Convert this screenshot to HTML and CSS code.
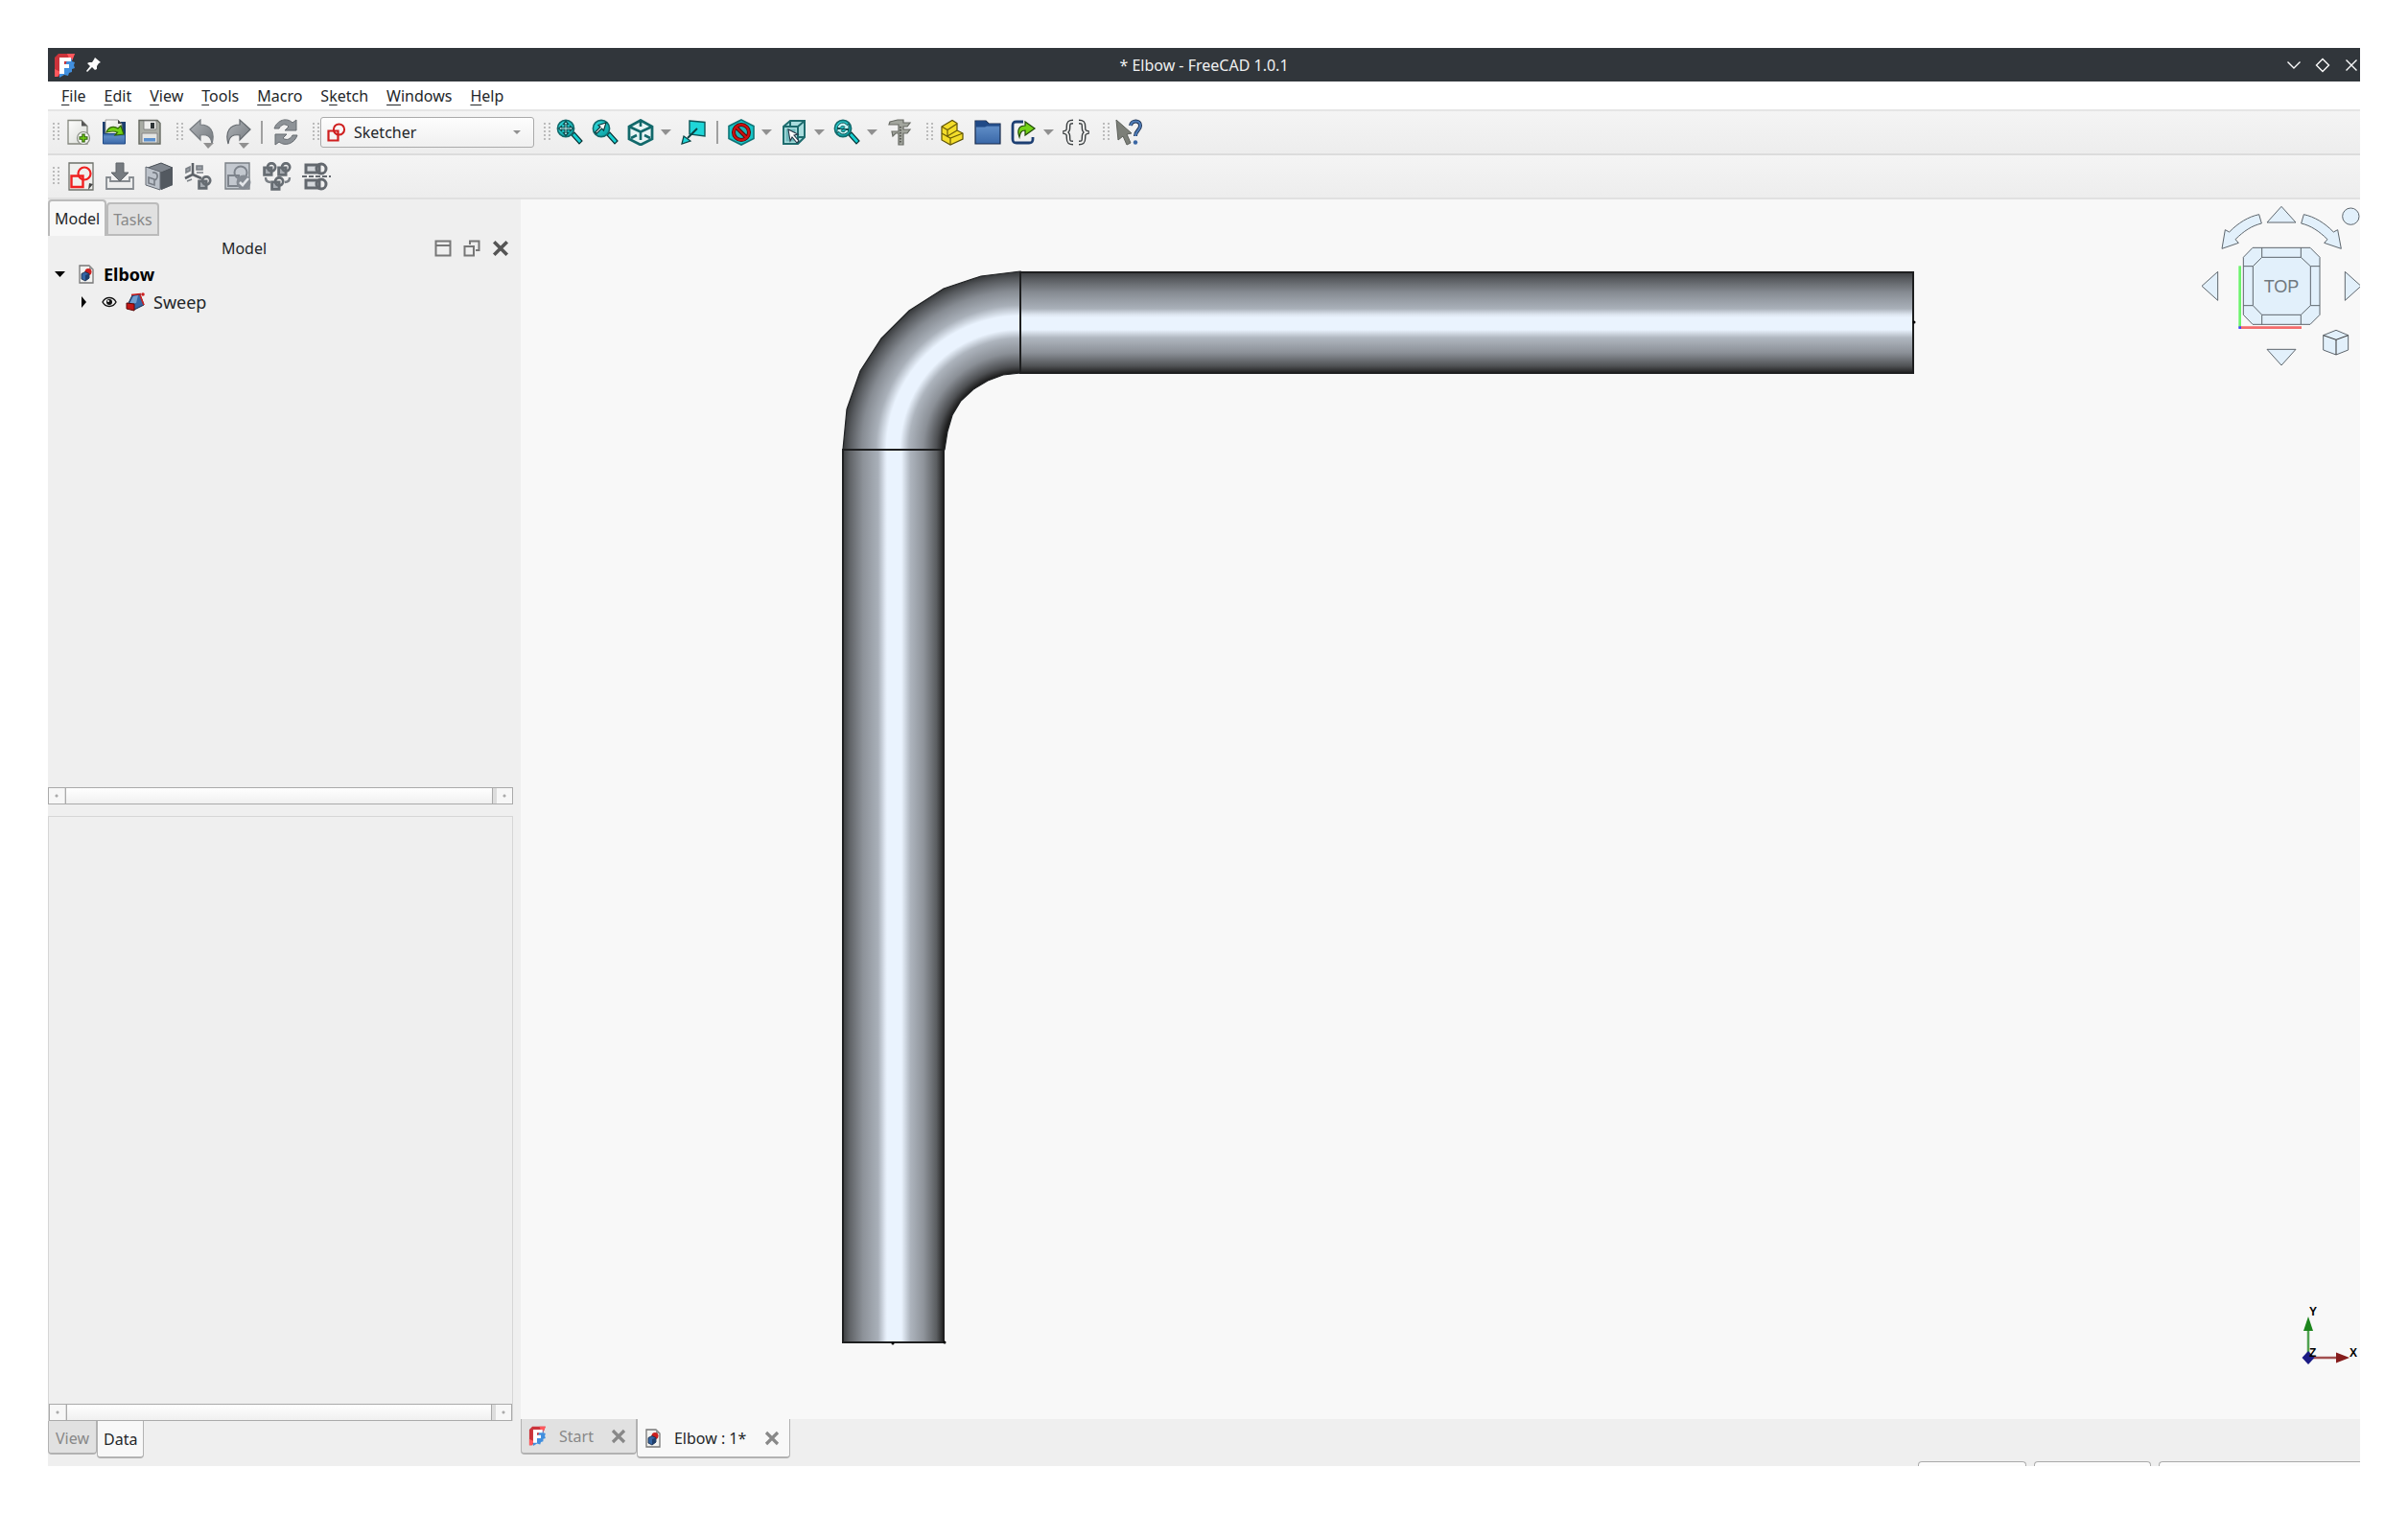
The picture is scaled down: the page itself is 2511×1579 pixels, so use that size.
FILE: index.html
```html
<!DOCTYPE html>
<html lang="en">
<head>
<meta charset="utf-8">
<title>* Elbow - FreeCAD 1.0.1</title>
<link rel="stylesheet" href="styles.css">
</head>
<body>
<svg class="defs" aria-hidden="true">
  <defs>
    <linearGradient id="gTeal" x1="0" y1="0" x2="1" y2="1"><stop offset="0" stop-color="#34e0e2"/><stop offset="1" stop-color="#06989a"/></linearGradient>
    <linearGradient id="gBlue" x1="0" y1="0" x2="0" y2="1"><stop offset="0" stop-color="#3465a4"/><stop offset=".3" stop-color="#5c8ac4"/><stop offset="1" stop-color="#3a68a8"/></linearGradient>
    <linearGradient id="gGray" x1="0" y1="0" x2="1" y2="1"><stop offset="0" stop-color="#b0b4b8"/><stop offset="1" stop-color="#74797e"/></linearGradient>
    <linearGradient id="gPaper" x1="0" y1="0" x2="1" y2="1"><stop offset="0" stop-color="#fdfdfc"/><stop offset="1" stop-color="#d8dbd6"/></linearGradient>
  </defs>
  <symbol id="logo" viewBox="0 0 22 26">
    <path d="M1 5 5 1h17l-4 10-8 4-5 10H1z" fill="#cb333b"/>
    <path d="M14 1h8l-4 10zM1 17l6 3-3 5H1z" fill="#ff585d"/>
    <path d="M14 8l5-2v3l3 1-1 3 1 3-3 1v3l-3 1-1 3-4-1-5 3 0-5 4-3z" fill="#418fde"/>
    <path d="M6 5h12v4h-7v3h5v4h-5v6H6z" fill="#fff"/>
  </symbol>
  <symbol id="doc" viewBox="0 0 16 20">
    <path d="M1 1h10l4 4v14H1z" fill="#f3f3f1" stroke="#777" stroke-width="1.3"/>
    <path d="M11 1v4h4z" fill="#999"/>
    <circle cx="10" cy="7.500" r="3.500" fill="#cc1f1f"/>
    <path d="M3 9.5 7 7.500l4 2V14l-4 3-4-2z" fill="#3465a4" stroke="#14233c" stroke-width=".8"/>
    <path d="M7 11v6l4-3V9.500z" fill="#1f3f6c"/>
  </symbol>
  <symbol id="lens" viewBox="0 0 28 28">
    <path d="M16 17l3-3 8 9-3 3z" fill="#16d0d2" stroke="#0b3234" stroke-width="1.200"/>
    <circle cx="10" cy="10" r="8.600" fill="url(#gTeal)" stroke="#12696b" stroke-width="1.600"/>
  </symbol>
  <symbol id="sketch" viewBox="0 0 20 20">
    <path d="M1.500 8.500h10v10h-10z" fill="none" stroke="#cf1f1f" stroke-width="2.200"/>
    <circle cx="12.500" cy="7" r="5.600" fill="none" stroke="#cf1f1f" stroke-width="2"/>
  </symbol>
  <symbol id="sketchGray" viewBox="0 0 14 14">
    <path d="M1.500 5.500h7v7h-7z" fill="#a6abb1" stroke="#666c72" stroke-width="2.600"/>
    <circle cx="8.500" cy="5" r="3.800" fill="none" stroke="#666c72" stroke-width="2.600"/>
  </symbol>
  <symbol id="close" viewBox="0 0 16 16"><path d="M2 2l12 12M14 2 2 14" fill="none" stroke="currentColor" stroke-width="3.200"/></symbol>
</svg>

<div class="window">
  <header class="titlebar">
    <div class="title-left">
      <svg width="22" height="26"><use href="#logo"/></svg>
      <svg width="15" height="15" viewBox="0 0 15 15"><path d="M9 0l6 5-2 1-2 3v3l-2 1-3-3-5 5-1-1 4-5-3-3 2-1h3l2-3z" fill="#fcfcfc"/></svg>
    </div>
    <h1 class="title">* Elbow - FreeCAD 1.0.1</h1>
    <div class="title-right">
      <button aria-label="Minimize"><svg width="16" height="16" viewBox="0 0 16 16"><path d="M1.500 4.500 8 11l6.500-6.500"/></svg></button>
      <button aria-label="Maximize"><svg width="16" height="16" viewBox="0 0 16 16"><path d="M8 1.500 14.500 8 8 14.500 1.500 8z"/></svg></button>
      <button aria-label="Close"><svg width="16" height="16" viewBox="0 0 16 16"><path d="M2.500 2.500l11 11m0-11-11 11"/></svg></button>
    </div>
  </header>

  <nav class="menubar">
    <button><u>F</u>ile</button><button><u>E</u>dit</button><button><u>V</u>iew</button><button><u>T</u>ools</button><button><u>M</u>acro</button><button>S<u>k</u>etch</button><button><u>W</u>indows</button><button><u>H</u>elp</button>
  </nav>

  <div class="toolbar main-tools">
    <div class="group">
      <i class="grip"></i>
      <button aria-label="New"><svg viewBox="0 0 28 28"><path d="M3 1.500h14l6 6v18.500H3z" fill="url(#gPaper)" stroke="#85887f" stroke-width="1.300"/><path d="M17 1.500v6h6z" fill="#555"/><circle cx="19" cy="20" r="6.500" fill="#f1f3ee" stroke="#8a8d86" stroke-width="1.200"/><path d="M19 15.500v9M14.500 20h9" stroke="#2c5a0c" stroke-width="3.400"/><path d="M19 16.500v7M15.500 20h7" stroke="#73d216" stroke-width="1.400"/></svg></button>
      <button aria-label="Open"><svg viewBox="0 0 28 28"><path d="M2 3h24v23H2z" fill="#1c3f70"/><path d="M5 1h13l4 4v12H5z" fill="url(#gPaper)" stroke="#888" stroke-width=".8"/><path d="M18 1v4h4z" fill="#444"/><path d="M2.500 15.500h23v10.500h-23z" fill="url(#gBlue)" stroke="#204a87"/><path d="M6 14c2-6 8-7 12-4l3-3 3 9-9 1 2.500-3c-4-2-7-1-11.500 0z" fill="#73d216" stroke="#2f6304" stroke-width="1.200"/></svg></button>
      <button aria-label="Save"><svg viewBox="0 0 28 28"><path d="M3 1.500h19l3 3V26H3z" fill="#a9aca4" stroke="#666961" stroke-width="1.400"/><path d="M8 2h13v9H8z" fill="#eeeeec" stroke="#777" stroke-width=".8"/><path d="M15 4h4v6h-4z" fill="#2e3436"/><path d="M6 15h16v10H6z" fill="#e4e5e2" stroke="#888"/><path d="M8 20h12v3.500H8z" fill="#5b8fce"/></svg></button>
    </div>
    <div class="group">
      <i class="grip"></i>
      <button aria-label="Undo"><svg viewBox="0 0 28 28"><path d="M1 11 12 1v5c9 0 16 6 12 20-1-8-5-10-12-9v5z" fill="url(#gGray)" stroke="#74797e" stroke-width="1.200"/></svg><b class="caret corner"></b></button>
      <button aria-label="Redo"><svg viewBox="0 0 28 28"><path d="M27 11 16 1v5C7 6 0 12 4 26c1-8 5-10 12-9v5z" fill="url(#gGray)" stroke="#63686d" stroke-width="1.200"/></svg><b class="caret corner"></b></button>
      <i class="divider"></i>
      <button aria-label="Refresh"><svg viewBox="0 0 28 28"><path d="M2 10c3-9 13-12 19-6l4-3v11H13l4-4c-4-4-8-2-10 2zM26 17c-3 9-13 12-19 7l-4 3V16h12l-4 4c4 3 8 1 10-3z" fill="#8d9297" stroke="#676c71" stroke-width="1"/></svg></button>
    </div>
    <div class="group">
      <i class="grip"></i>
      <div class="combo">
        <svg width="20" height="20"><use href="#sketch"/></svg>
        <select aria-label="Workbench"><option>Sketcher</option></select>
        <b class="caret small"></b>
      </div>
    </div>
    <div class="group">
      <i class="grip"></i>
      <button aria-label="Fit all"><svg viewBox="0 0 28 28"><use href="#lens"/><path d="M10 2.500l2.500 3H11V9h3.500V7.500l3 2.500-3 2.500V11H11v3.500h1.500l-2.500 3-2.500-3H9V11H5.500v1.500l-3-2.500 3-2.500V9H9V5.500H7.500z" fill="#c8f7f8" stroke="#0e4a4c" stroke-width="1.200"/></svg></button>
      <button aria-label="Fit selection"><svg viewBox="0 0 28 28"><use href="#lens"/><path d="M3.500 14 9 8.500 7 6.500l8-2.500-2.500 8-2-2L5 15.500z" fill="#fff" stroke="#0e3c3e" stroke-width="1.200"/></svg></button>
      <button aria-label="Isometric"><svg viewBox="0 0 28 28"><path d="M14 1.500 26 8v13l-12 6-12-6V8z" fill="#e8f5f5" stroke="#12696b" stroke-width="2.800"/><path d="M14 14.500V22M2 8l12 5.500L26 8M14 2v6M4 20l6-3M24 20l-6-3" fill="none" stroke="#12696b" stroke-width="2.600"/></svg></button>
      <b class="caret"></b>
      <button aria-label="Align to selection"><svg viewBox="0 0 28 28"><path d="M10 2l16 1.500V18L10 16z" fill="#1fd6d8" stroke="#0e5557" stroke-width="1.400"/><path d="M18 10 8 20" stroke="#0b4143" stroke-width="2"/><path d="M2 26l2-8 7 5z" fill="#1fd6d8" stroke="#0b4143" stroke-width="1.200"/></svg></button>
      <i class="divider"></i>
      <button aria-label="Draw style"><svg viewBox="0 0 28 28"><path d="M14 1 27 7.500v13L14 27 1 20.500v-13z" fill="#16c5c8" stroke="#0e7577" stroke-width="1.600"/><circle cx="14" cy="14" r="8" fill="#1fb4b6" stroke="#4c0707" stroke-width="4"/><path d="M8.500 8.500l11 11" stroke="#4c0707" stroke-width="4"/><circle cx="14" cy="14" r="8" fill="none" stroke="#cc0f0f" stroke-width="2.400"/><path d="M8.500 8.500l11 11" stroke="#cc0f0f" stroke-width="2.400"/></svg></button>
      <b class="caret"></b>
      <button aria-label="Bounding box"><svg viewBox="0 0 28 28"><path d="M3 8l7-6h15v17l-7 7H3z" fill="#a9dcdd" stroke="#1e6c6e" stroke-width="2"/><path d="M3 8h15l7-6M18 8v18M10 2v6M18 19h7" fill="none" stroke="#1e6c6e" stroke-width="2"/><path d="M5.500 10.500h10v13h-10z" fill="#6fb9bb"/><path d="M8 11l10 5-4 1 5 6-2 2-5-6-2 4z" fill="#fff" stroke="#234" stroke-width="1.100"/></svg></button>
      <b class="caret"></b>
      <button aria-label="Sync view"><svg viewBox="0 0 28 28"><use href="#lens"/><path d="M4 9.500c1-6 8-7 10-3l2-1v5h-6l2-2c-2-2-4-1-5 1zM16 11.500c-1 5-8 6-10 2l-2 1v-4h6l-2 2c2 2 4 1 5-1z" fill="#c5f4f4" stroke="#0e4c4e" stroke-width="1"/></svg></button>
      <b class="caret"></b>
      <button aria-label="Measure"><svg viewBox="0 0 28 28"><path d="M4 3 12 1h6v3h7l-3 4h-4v3h7l-3 4h-4v12h-5V15h-3l-3 3-1-5h7V6H3z" fill="#a2a59d" stroke="#686b64" stroke-width="1.200"/><path d="M15 8v18" stroke="#4b4d48" stroke-width="1.600" stroke-dasharray="1.500 1.500"/></svg></button>
    </div>
    <div class="group">
      <i class="grip"></i>
      <button aria-label="Part"><svg viewBox="0 0 28 28"><path d="M3 8 14 1.500l5 3V12l6 3v6l-13 6-9-5z" fill="#f4dd2a" stroke="#5e5205" stroke-width="1.200"/><path d="M3 8l6 3.500L19 5M9 11.500V18l10-6M3 15l9 5 13-5M12 20v7" fill="none" stroke="#6b5d06" stroke-width="1.200"/></svg></button>
      <button aria-label="Group"><svg viewBox="0 0 28 28"><path d="M1 2h11l3 3h12v21H1z" fill="url(#gBlue)" stroke="#16294a" stroke-width="1.200"/><path d="M1.500 2.500H12l3 3h11.500V7.500H13l-2 1H1.500z" fill="#204a87"/></svg></button>
      <button aria-label="Export link"><svg viewBox="0 0 28 28"><path d="M14 3H7C4 3 3 4 3 7v14c0 3 1 4 4 4h13c3 0 4-1 4-4v-2" fill="none" stroke="#1d3f73" stroke-width="2.800"/><path d="M10 19c-3-8 0-12 6-12V3l10 7-10 7v-5c-4 0-5 2-6 7z" fill="#73d216" stroke="#204a07" stroke-width="1.200"/></svg></button>
      <b class="caret"></b>
      <button aria-label="Expression"><svg viewBox="0 0 28 28"><g fill="none"><path d="M11 3c-4 0-5 1-5 5 0 3 0 5-3 6 3 1 3 3 3 6 0 4 1 5 5 5M17 3c4 0 5 1 5 5 0 3 0 5 3 6-3 1-3 3-3 6 0 4-1 5-5 5" stroke="#3c4042" stroke-width="4.800"/><path d="M11 3c-4 0-5 1-5 5 0 3 0 5-3 6 3 1 3 3 3 6 0 4 1 5 5 5M17 3c4 0 5 1 5 5 0 3 0 5 3 6-3 1-3 3-3 6 0 4-1 5-5 5" stroke="#f0f0ef" stroke-width="2"/></g></svg></button>
    </div>
    <div class="group">
      <i class="grip"></i>
      <button aria-label="What's this?"><svg viewBox="0 0 28 28"><path d="M16 7c1-6 10-6 10 0 0 5-5 5-5 11" fill="none" stroke="#1b2f50" stroke-width="4"/><path d="M16 7c1-6 10-6 10 0 0 5-5 5-5 11" fill="none" stroke="#4f7db8" stroke-width="2.200"/><circle cx="21" cy="24.500" r="2.200" fill="#3a66a3"/><path d="M1 1l16 14-5 1 4 9-4 2-4-9-5 4z" fill="#7c7f78" stroke="#5d605a"/></svg></button>
    </div>
  </div>

  <div class="toolbar sketch-tools">
    <div class="group">
      <i class="grip"></i>
      <button aria-label="New sketch"><svg viewBox="0 0 30 30"><path d="M3 1h25v28H3z" fill="#f0f0ee" stroke="#6e716b" stroke-width="1.300"/><path d="M23 29l1-7 4 1z" fill="#444"/><path d="M5.500 14.500h12v11.500h-12z" fill="none" stroke="#ef2020" stroke-width="2.400"/><circle cx="19" cy="12" r="6.500" fill="none" stroke="#ef2020" stroke-width="2.200"/></svg></button>
      <button aria-label="Edit sketch"><svg viewBox="0 0 30 30"><path d="M5 16v4h20v-4h4v12H1V16z" fill="#eceded" stroke="#868b90" stroke-width="1.800"/><path d="M11 1h8v10h5l-9 9-9-9h5z" fill="#767b80" stroke="#5f6469"/></svg></button>
      <button aria-label="Map sketch"><svg viewBox="0 0 30 30"><path d="M3 6 17 1l12 5v18l-12 5z" fill="#585e66"/><path d="M3 6 17 1l12 5-12 5z" fill="#80868e" stroke="#4c5259"/><path d="M1 5l15 5v19L1 24z" fill="#bcc2ca" stroke="#656b73"/><path d="M17 11l12-5v18l-12 5z" fill="#535960"/><path d="M4 16l6 2v6l-6-2zM8 11c5-1 7 4 3 8" fill="none" stroke="#767c84" stroke-width="1.600"/></svg></button>
      <button aria-label="Reorient sketch"><svg viewBox="0 0 30 30"><path d="M9 1v12L1 17M9 13l9 4" fill="none" stroke="#5d6268" stroke-width="2.600"/><path d="M13 4h6v4h-6zM2 7l4-2v4l-4 2zM13 11h7M3 20l5-2" fill="#9a9fa5" stroke="#7b8086" stroke-width="1.600"/><use href="#sketchGray" x="14" y="14" width="15" height="15"/></svg></button>
      <button aria-label="Validate sketch"><svg viewBox="0 0 30 30"><path d="M2 1h25v27H2z" fill="#c3c8cf" stroke="#7b8086" stroke-width="1.400"/><path d="M5 14h11v11H5z" fill="none" stroke="#7d838b" stroke-width="2"/><circle cx="18" cy="11" r="6.500" fill="none" stroke="#7d838b" stroke-width="2"/><circle cx="21" cy="21" r="7.500" fill="#858b93"/><path d="M17 21l3 3 6-7" fill="none" stroke="#e3e6ea" stroke-width="2.600"/></svg></button>
      <button aria-label="Merge sketches"><svg viewBox="0 0 30 30"><use href="#sketchGray" x="0" y="0" width="15" height="15"/><use href="#sketchGray" x="15" y="0" width="15" height="15"/><use href="#sketchGray" x="8" y="15" width="15" height="15"/><path d="M3 16c0 4 2 5 5 5M28 16c0 4-2 5-5 5" fill="none" stroke="#7b8086" stroke-width="2.400"/></svg></button>
      <button aria-label="Mirror sketch"><svg viewBox="0 0 30 30"><path d="M4 3h14v8H4zM4 19h14v8H4z" fill="#d5d8dc" stroke="#63686e" stroke-width="3"/><circle cx="20" cy="7" r="5" fill="none" stroke="#63686e" stroke-width="3"/><circle cx="20" cy="23" r="5" fill="none" stroke="#63686e" stroke-width="3"/><path d="M0 15h30" stroke="#63686e" stroke-width="2" stroke-dasharray="5 2"/></svg></button>
    </div>
  </div>

  <div class="workspace">
    <aside class="side">
      <div class="tabs top">
        <button class="tab active">Model</button><button class="tab">Tasks</button>
      </div>
      <div class="dock-title">
        <h2>Model</h2>
        <button aria-label="Collapse"><svg width="18" height="18" viewBox="0 0 18 18"><path d="M1.500 1.500h15v15h-15zM1.500 6h15" fill="none" stroke="#777" stroke-width="2"/></svg></button>
        <button aria-label="Float"><svg width="18" height="18" viewBox="0 0 18 18"><path d="M1.500 7h9.500v9.500H1.500z" fill="none" stroke="#777" stroke-width="2"/><path d="M7 5V1.500h9.500V11H13" fill="none" stroke="#777" stroke-width="2"/></svg></button>
        <button aria-label="Close panel" class="dark"><svg width="18" height="18"><use href="#close"/></svg></button>
      </div>
      <ul class="tree">
        <li><svg class="twist" viewBox="0 0 12 12"><path d="M1 3h11L6.500 9z"/></svg><svg width="16" height="20"><use href="#doc"/></svg><strong>Elbow</strong></li>
        <li class="child"><svg class="twist" viewBox="0 0 12 12"><path d="M4 0l5 6-5 6z"/></svg><svg width="16" height="12" viewBox="0 0 16 12"><path d="M1 6c3-6 11-6 14 0-3 6-11 6-14 0z" fill="none" stroke="#111" stroke-width="1.400"/><circle cx="8" cy="6" r="3" fill="#111"/><circle cx="7" cy="5" r="1" fill="#fff"/></svg><svg width="20" height="20" viewBox="0 0 20 20"><path d="M7 3l8-1 4 11-10 5-7-5z" fill="#3465a4" stroke="#182c4c"/><path d="M8 4l5-1-2 8-7 1z" fill="#729fcf"/><path d="M1 11l8 1v7l-8-2z" fill="#c11616" stroke="#5c0808"/><path d="M6 2.500l10-1M15 3l4 10" stroke="#cc1f1f" stroke-width="1.600"/><circle cx="18" cy="2" r="1.800" fill="#cc1f1f"/></svg><span>Sweep</span></li>
      </ul>
      <div class="hscroll"><i class="step"></i><i class="thumb"></i><i class="step"></i></div>
      <div class="properties">
        <div class="hscroll"><i class="step"></i><i class="thumb"></i><i class="step"></i></div>
      </div>
      <div class="tabs bottom">
        <button class="tab">View</button><button class="tab active">Data</button>
      </div>
    </aside>

    <main class="mdi">
      <div class="viewport">
        <svg class="scene" viewBox="543 208 1918 1272" role="img" aria-label="Elbow pipe, top view">
          <defs>
            <linearGradient id="pipeH" x1="0" y1="0" x2="0" y2="1">
              <stop offset="0" stop-color="#3c3e40"/><stop offset=".07" stop-color="#5a5d61"/><stop offset=".2" stop-color="#868b92"/><stop offset=".36" stop-color="#a9b0b9"/><stop offset=".42" stop-color="#dde5ef"/><stop offset=".45" stop-color="#eaf3fe"/><stop offset=".57" stop-color="#eaf3fe"/><stop offset=".65" stop-color="#b0b7c0"/><stop offset=".8" stop-color="#8b9097"/><stop offset=".93" stop-color="#505255"/><stop offset="1" stop-color="#1f1f1f"/>
            </linearGradient>
            <linearGradient id="pipeV" x1="0" y1="0" x2="1" y2="0">
              <stop offset="0" stop-color="#3c3e40"/><stop offset=".07" stop-color="#616468"/><stop offset=".2" stop-color="#8d9299"/><stop offset=".35" stop-color="#a9b0b9"/><stop offset=".42" stop-color="#e0e8f3"/><stop offset=".44" stop-color="#eaf3fe"/><stop offset=".58" stop-color="#eaf3fe"/><stop offset=".67" stop-color="#adb4bd"/><stop offset=".8" stop-color="#8f949b"/><stop offset=".93" stop-color="#5a5d60"/><stop offset="1" stop-color="#1f1f1f"/>
            </linearGradient>
            <radialGradient id="pipeBend" gradientUnits="userSpaceOnUse" cx="1064" cy="469" r="186">
              <stop offset=".43" stop-color="#1c1c1c"/><stop offset=".47" stop-color="#4d4f52"/><stop offset=".545" stop-color="#8b9097"/><stop offset=".625" stop-color="#adb4bd"/><stop offset=".675" stop-color="#eaf3fe"/><stop offset=".75" stop-color="#eaf3fe"/><stop offset=".81" stop-color="#a9b0b9"/><stop offset=".89" stop-color="#868b92"/><stop offset=".96" stop-color="#55585c"/><stop offset="1" stop-color="#333537"/>
            </radialGradient>
          </defs>
          <path d="M1064 283 1023 288 984 301 948 324 919 353 897 387 883 427 879 469H985L988 450 993 433 1002 418 1015 406 1030 397 1046 391 1064 389z" fill="url(#pipeBend)" stroke="#202224" stroke-width="1.200"/>
          <rect x="1064" y="284" width="931" height="105" fill="url(#pipeH)" stroke="#1e1f20" stroke-width="2"/>
          <rect x="879" y="469" width="105" height="931" fill="url(#pipeV)" stroke="#1e1f20" stroke-width="2"/>
          <circle cx="1996" cy="336" r="1.500"/><circle cx="931" cy="1401" r="1.500"/><circle cx="985" cy="1400" r="1.500"/>
        </svg>
        <svg class="navcube" viewBox="90 504 513 546" role="img" aria-label="Navigation cube">
          <g fill="#e2f0fb" stroke="#5e666d" stroke-width="3" stroke-linejoin="round">
            <path d="M357 526 402 576H312zM357 1023 402 973H312zM108 775l50-45v90zM606 775l-50-45v90z"/>
            <circle cx="574" cy="557" r="26"/>
            <path d="M287 551l8 28c-30 7-56 24-82 50l10 11-52 18 10-59 13 7c28-29 60-48 93-55z"/>
            <path d="M427 551l-8 28c30 7 56 24 82 50l-10 11 53 18-11-59-13 7c-28-29-60-48-93-55z"/>
            <path d="M267 655H447L477 685V865L447 895H267L238 865V685z"/>
            <path d="M296 685H418L448 713V836L418 865H296L268 836V713zM296 655v30M418 655v30M296 865v30M418 865v30M238 713h30M238 836h30M448 713h29M448 836h29" fill="none"/>
            <path d="M488 929l40-16 38 16v46l-38 15-40-15z"/><path d="M488 929l40 14 38-14M528 943v47" fill="none" stroke="#333"/>
          </g>
          <path d="M227 712V905" stroke="#6cf46c" stroke-width="8"/><path d="M227 905H420" stroke="#f46c6c" stroke-width="8"/><path d="M223 901h8v8h-8z" fill="#44f"/>
          <text x="357" y="794" text-anchor="middle" class="face">TOP</text>
        </svg>
        <svg class="axes" viewBox="0 0 70 70" role="img" aria-label="Axis cross">
          <path d="M16 57V28" stroke="#4fa24f" stroke-width="2.500"/><path d="M16 14l5 15H11z" fill="#1c851c"/>
          <path d="M16 57h30" stroke="#a24f4f" stroke-width="2.500"/><path d="M59 57 45 51.500v11z" fill="#851c1c"/>
          <path d="M16 50l6.500 7-6.500 7-6.500-7z" fill="#1c1c85"/>
          <text x="17" y="13">Y</text><text x="59" y="56">X</text><text x="17" y="56">Z</text>
        </svg>
      </div>
      <footer class="mdi-footer">
        <div class="tabs docs">
          <div class="tab"><svg width="18" height="21"><use href="#logo"/></svg><span>Start</span><button aria-label="Close Start"><svg width="16" height="16"><use href="#close"/></svg></button></div>
          <div class="tab active"><svg width="16" height="20"><use href="#doc"/></svg><span>Elbow : 1*</span><button aria-label="Close Elbow"><svg width="16" height="16"><use href="#close"/></svg></button></div>
        </div>
        <div class="status"><i class="field a"></i><i class="field b"></i><i class="field c"></i></div>
      </footer>
    </main>
  </div>
</div>
</body>
</html>
```
FILE: styles.css
```css
* { box-sizing: border-box; }
body { margin: 0; padding: 50px; background: #fff; font: 16px/22px "Noto Sans", "Open Sans", sans-serif; color: #232629; }
button { border: 0; background: none; padding: 0; margin: 0; font: inherit; color: inherit; display: flex; align-items: center; justify-content: center; }
h1, h2 { margin: 0; font-size: 16px; font-weight: 400; }
.defs { position: absolute; width: 0; height: 0; }
.window { display: flex; flex-direction: column; min-height: calc(100vh - 100px); background: #efefef; overflow: hidden; }

.titlebar { display: grid; grid-template-columns: 1fr auto 1fr; align-items: center; height: 35px; background: #31363b; color: #eff0f1; }
.title-left { display: flex; align-items: center; gap: 12px; padding-left: 6px; }
.title-right { display: flex; justify-content: flex-end; gap: 14px; padding-right: 1px; }
.title-right path { fill: none; stroke: #fcfcfc; stroke-width: 1.4; }

.menubar { display: flex; gap: 1px; height: 29px; background: #fff; padding-left: 5px; }
.menubar button { display: block; padding: 1px 9px 0; }
.menubar u { text-decoration-thickness: 1px; text-underline-offset: 3px; }

.toolbar { display: flex; gap: 10px; padding-left: 5px; background: linear-gradient(#f4f4f4, #ededed); }
.main-tools { height: 48px; border-top: 2px solid #e5e5e5; border-bottom: 2px solid #dcdcdc; }
.sketch-tools { height: 46px; border-bottom: 2px solid #e0e0e0; }
.group { display: flex; align-items: center; }
.group button { position: relative; width: 37px; height: 36px; }
.group button svg { width: 28px; height: 28px; }
.sketch-tools .group button { width: 41px; }
.sketch-tools .group button svg { width: 30px; height: 30px; }
.grip { width: 8px; height: 20px; background: radial-gradient(circle at 1px 1px, #bbb 1px, transparent 1px) 0 0 / 5px 4px; }
.divider { width: 13px; height: 24px; background: linear-gradient(#a0a0a0, #a0a0a0) center / 2px 100% no-repeat; }
.caret { width: 18px; height: 6px; background: #909090; clip-path: polygon(3px 0, 14px 0, 8px 6px); }
.caret.corner { position: absolute; right: 2px; bottom: 1px; }
.caret.small { width: 8px; height: 4px; clip-path: polygon(0 0, 100% 0, 50% 100%); }
.combo { display: flex; align-items: center; width: 223px; height: 32px; padding: 0 13px 0 6px; border: 1px solid #aaa; border-radius: 3px; background: linear-gradient(#fdfdfd, #f0f0f0); }
.combo select { flex: 1; appearance: none; border: 0; background: none; font: inherit; color: inherit; padding: 0 0 0 8px; }

.workspace { flex: 1; display: flex; }
.side { width: 493px; padding-right: 8px; display: flex; flex-direction: column; flex: none; }
.tabs { display: flex; }
.tab { border: 1px solid #b2b2b2; background: #e1e1e1; color: #888; padding: 0 6px; }
.tab.active { background: #f8f8f8; color: #232629; }
.tabs.top { align-items: flex-end; height: 38px; }
.top .tab { height: 35px; padding: 0 5px; border-radius: 4px 4px 0 0; border-width: 2px; border-color: #bbb; }
.top .tab.active { height: 38px; border-bottom: 0; }
.bottom .tab, .docs .tab { border-top: 0; border-bottom-width: 2px; border-radius: 0 0 4px 4px; }
.dock-title { display: flex; align-items: center; gap: 12px; height: 25px; padding-right: 4px; }
.dock-title h2 { flex: 1; text-align: center; padding-left: 18px; }
.dock-title button { color: #555; }
.tree { flex: 550 1 0; margin: 0; padding: 0 0 0 6px; list-style: none; font-size: 18px; color: #232629; }
.tree li { display: flex; align-items: center; height: 29px; gap: 10px; }
.tree strong { color: #000; }
.tree .child { padding-left: 25px; gap: 9px; }
.twist { width: 12px; height: 12px; margin-right: 4px; }
.hscroll { display: flex; gap: 1px; height: 18px; border: 1px solid #aaa; background: #ddd; }
.step { width: 16px; background: radial-gradient(circle, #aaa 1px, #f7f7f7 2px); }
.thumb { flex: 1; border: solid #aaa; border-width: 0 1px; background: linear-gradient(#fff, #f0f0f0); margin-right: 3px; }
.properties { flex: 630 1 0; display: flex; flex-direction: column; justify-content: flex-end; margin-top: 12px; border: 1px solid #d6d6d6; border-bottom: 0; }
.tabs.bottom { height: 47px; align-items: flex-start; }
.bottom .tab { height: 35px; padding: 2px 7px 0; }
.bottom .tab.active { height: 39px; padding: 1px 6px 0; }

.mdi { flex: 1; display: flex; flex-direction: column; min-width: 0; }
.viewport { flex: 1; position: relative; min-height: 0; background: #f8f8f8; }
.scene { position: absolute; inset: 0; width: 100%; height: 100%; }
.navcube { position: absolute; top: 0; right: 0; width: 171px; height: 182px; }
.face { font: 54px "Liberation Sans", Arial, sans-serif; fill: #70787f; }
.axes { position: absolute; right: 0; bottom: 51px; width: 70px; height: 70px; font: bold 12px "Liberation Sans", Arial, sans-serif; }
.mdi-footer { display: flex; justify-content: space-between; height: 49px; }
.docs .tab { display: flex; align-items: center; height: 37px; padding: 0 10px 0 7px; }
.docs .tab.active { height: 41px; padding-left: 8px; }
.docs span { padding: 0 18px 0 14px; }
.docs .active span { padding-right: 19px; }
.docs button { color: #888; }
.status { display: flex; align-items: flex-end; gap: 8px; }
.field { height: 5px; border: 1px solid #aaa; border-bottom: 0; border-radius: 4px 4px 0 0; background: #fcfcfc; }
.field.a { width: 113px; }
.field.b { width: 122px; }
.field.c { width: 210px; border-right: 0; border-radius: 4px 0 0 0; }
```
